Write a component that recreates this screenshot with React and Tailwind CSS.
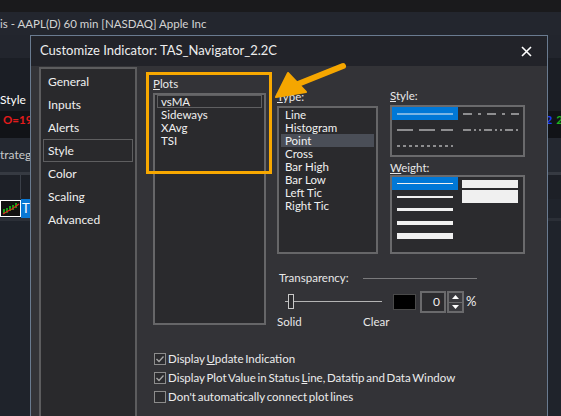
import React from 'react';

const navItems = ['General', 'Inputs', 'Alerts', 'Style', 'Color', 'Scaling', 'Advanced'];
const plots = ['vsMA', 'Sideways', 'XAvg', 'TSI'];
const types = ['Line', 'Histogram', 'Point', 'Cross', 'Bar High', 'Bar Low', 'Left Tic', 'Right Tic'];

// dash patterns for the Style grid, left column then right column
const styleCells = [
  { dash: undefined, selected: true },
  { dash: '9 6 3 6' },
  { dash: '16 6' },
  { dash: '8 3 2 3 2 3' },
  { dash: '3 3' },
  null,
];

function DashCell({ cell }) {
  if (!cell) return <div className="h-[13px]" />;
  return (
    <div className={`h-[13px] flex items-center pl-[5px] ${cell.selected ? 'bg-[#0078d7]' : ''}`}>
      <svg width="56" height="2" className="block">
        <line x1="0" y1="1" x2="56" y2="1" stroke="#f2f2f2" strokeWidth="1" strokeDasharray={cell.dash} />
      </svg>
    </div>
  );
}

function Checkbox({ checked, children }) {
  return (
    <div className="h-[19px] flex items-center">
      <div className="w-[12px] h-[12px] border border-[#8c8c8c] bg-[#2c2c2f] flex items-center justify-center shrink-0">
        {checked && (
          <svg width="10" height="10" viewBox="0 0 10 10">
            <polyline points="1.5,5 4,7.5 8.5,2.5" fill="none" stroke="#a8a8a8" strokeWidth="1.3" />
          </svg>
        )}
      </div>
      <span className="ml-[2px] text-[11.5px] leading-[15px] [word-spacing:-1.2px] text-[#ececec] whitespace-nowrap">
        {children}
      </span>
    </div>
  );
}

export default function App() {
  return (
    <div className="relative w-[561px] h-[416px] overflow-hidden bg-[#1f232b] font-['Lato',sans-serif]">
      {/* chart window behind the dialog */}
      <div className="flex flex-col">
        <div className="h-[12px] bg-[#1a1a1c]" />
        <div className="h-[23px] bg-[#23262e] text-[11.5px] leading-[23px] text-[#d4d4d4] whitespace-nowrap">
          is - AAPL(D) 60 min [NASDAQ] Apple Inc
        </div>
        <div className="h-[23px] bg-[#22252d]" />
        <div className="h-[53px] bg-[#1b1e25] flex items-end">
          <span className="text-[12px] leading-[23px] text-white">Style</span>
        </div>
        <div className="h-[27px] bg-[#111317] flex justify-between pt-[2px] text-[11.5px] font-bold leading-[14px]">
          <span className="ml-[3px] text-[#e31b1b]">O=19</span>
          <span className="flex gap-[4px] mr-[-2px]">
            <span className="text-[#1a3cff]">2</span>
            <span className="text-[#1fb51f]">2</span>
          </span>
        </div>
        <div className="h-[34px] bg-[#242830] flex items-center text-[12px] text-[#c8c8c8]">trategy</div>
        <div className="h-[3px] bg-[#363a42]" />
        <div className="h-[24px] flex bg-[#1d2027]">
          <div className="w-[21px] border-r border-[#3a3f48]" />
        </div>
        <div className="h-[19px] flex items-center">
          <div className="w-[21px] h-[17px] border border-white bg-[#111] flex items-center justify-center">
            <svg width="18" height="14" viewBox="0 0 18 14">
              <path d="M2 12 L2 7 M5 11 L5 6 M8 9 L8 4 M11 8 L11 3 M14 6 L14 1" stroke="#18d018" strokeWidth="1.5" />
              <path d="M1 12 L6 9 L10 7 L17 2" stroke="#e02020" strokeWidth="1.2" fill="none" />
            </svg>
          </div>
          <div className="w-[12px] h-[19px] bg-[#0a78d4] text-white text-[13px] leading-[19px] pl-[1px]">T</div>
        </div>
        <div className="h-[3px] bg-[#2b2f37]" />
      </div>

      {/* dialog window */}
      <div className="absolute left-[30px] top-[35px] w-[518px] h-[392px] border border-[#6a7b90] bg-[#333337] flex flex-col">
        <div className="h-[30px] shrink-0 bg-[#222329] flex items-center justify-between pl-[9px] pr-[15px]">
          <span className="text-[13px] text-[#eeeeee]">Customize Indicator: TAS_Navigator_2.2C</span>
          <svg width="11" height="11" viewBox="0 0 11 11">
            <path d="M1 1 L10 10 M10 1 L1 10" stroke="#ffffff" strokeWidth="1.6" />
          </svg>
        </div>

        <div className="flex-1 flex pl-[8px] pt-[1px] text-[11.5px]">
          {/* left nav */}
          <div className="w-[98px] border-2 border-[#5c5c5e] bg-[#29292c] pt-[1px] px-[2px]">
            {navItems.map((item) => (
              <div
                key={item}
                className={`h-[23px] flex items-center pl-[4px] border text-[12px] text-[#f0f0f0] ${
                  item === 'Style' ? 'border-[#5e5e60]' : 'border-transparent'
                }`}
              >
                {item}
              </div>
            ))}
          </div>

          {/* main panel */}
          <div className="ml-[16px] pt-[10px] flex flex-col">
            <div className="flex h-[252px]">
              {/* Plots */}
              <div className="w-[113px] flex flex-col">
                <div className="h-[14px] leading-[14px] text-[#e8e8e8]">
                  <u>P</u>lots
                </div>
                <div className="mt-[2px] h-[232px] border-2 border-[#666668] bg-[#2a2a2d] px-[2px]">
                  {plots.map((p, i) => (
                    <div
                      key={p}
                      className={`h-[13px] leading-[11px] flex items-center pl-[3px] border text-[#f0f0f0] ${
                        i === 0 ? 'border-[#5f5f61]' : 'border-transparent'
                      }`}
                    >
                      {p}
                    </div>
                  ))}
                </div>
              </div>

              <div className="ml-[11px] flex flex-col">
                <div className="flex">
                  {/* Type */}
                  <div className="w-[101px] mt-[13px] flex flex-col">
                    <div className="h-[14px] leading-[14px] text-[#e8e8e8]">
                      <u>T</u>ype:
                    </div>
                    <div className="mt-[2px] h-[148px] border-2 border-[#666668] bg-[#2a2a2d] px-[2px]">
                      {types.map((t) => (
                        <div
                          key={t}
                          className={`h-[13px] leading-[13px] flex items-center pl-[4px] text-[#f0f0f0] ${
                            t === 'Point' ? 'bg-[#4a4e57]' : ''
                          }`}
                        >
                          {t}
                        </div>
                      ))}
                    </div>
                  </div>

                  {/* Style + Weight */}
                  <div className="ml-[12px] w-[135px] mt-[12px] flex flex-col">
                    <div className="h-[16px] leading-[14px] text-[#e8e8e8]">
                      <u>S</u>tyle:
                    </div>
                    <div className="h-[52px] border-2 border-[#6a6a6c] bg-[#2b2b2e] grid grid-cols-[66px_65px]">
                      {[0, 1, 2, 3, 4, 5].map((i) => (
                        <DashCell key={i} cell={styleCells[i]} />
                      ))}
                    </div>
                    <div className="mt-[3px] h-[15px] leading-[15px] text-[#e8e8e8]">
                      <u>W</u>eight:
                    </div>
                    <div className="h-[79px] border-2 border-[#6a6a6c] bg-[#2b2b2e] flex">
                      <div className="w-[66px] flex flex-col">
                        {[1, 2, 3, 4, 6].map((t, i) => (
                          <div
                            key={t}
                            className={`h-[13px] flex items-center pl-[5px] ${i === 0 ? 'bg-[#0078d7]' : ''}`}
                          >
                            <div className="w-[56px] bg-[#f0f0f0]" style={{ height: t }} />
                          </div>
                        ))}
                      </div>
                      <div className="w-[65px] flex flex-col pl-[4px]">
                        <div className="h-[13px] flex items-center">
                          <div className="w-[56px] h-[8px] bg-[#f0f0f0]" />
                        </div>
                        <div className="h-[13px] w-[56px] bg-[#f0f0f0]" />
                      </div>
                    </div>
                  </div>
                </div>

                {/* Transparency */}
                <div className="mt-[17px] h-[14px] flex items-center">
                  <span className="w-[86px] pl-[2px] text-[#e8e8e8]">Transparency:</span>
                  <div className="w-[114px] h-px bg-[#7a7a7c]" />
                </div>
                <div className="mt-[6px] h-[22px] flex items-center">
                  <div className="relative ml-[8px] w-[97px] h-[16px]">
                    <div className="absolute left-0 right-0 top-[7px] h-px bg-[#b4b4b4]" />
                    <div className="absolute left-[3px] top-[0px] w-[6px] h-[15px] border border-[#c8c8c8] bg-[#2c2c2f]" />
                  </div>
                  <div className="ml-[11px] w-[23px] h-[16px] bg-black border border-[#4a4a4a]" />
                  <div className="ml-[4px] w-[26px] h-[22px] border-2 border-[#6a6a6c] bg-[#2b2b2e] flex items-center justify-end pr-[4px] text-[12px] text-[#f0f0f0]">
                    0
                  </div>
                  <div className="ml-[1px] w-[17px] h-[22px] border-2 border-[#6a6a6c] bg-[#3a3a3e] flex flex-col">
                    <div className="flex-1 flex items-center justify-center border-b border-[#6a6a6c]">
                      <svg width="7" height="4" viewBox="0 0 7 4">
                        <path d="M0 4 L3.5 0 L7 4Z" fill="#ffffff" />
                      </svg>
                    </div>
                    <div className="flex-1 flex items-center justify-center">
                      <svg width="7" height="4" viewBox="0 0 7 4">
                        <path d="M0 0 L3.5 4 L7 0Z" fill="#ffffff" />
                      </svg>
                    </div>
                  </div>
                  <span className="ml-[2px] text-[13px] text-[#f0f0f0]">%</span>
                </div>
                <div className="mt-[2px] h-[14px] flex items-center text-[#e8e8e8]">
                  <span className="w-[86px]">Solid</span>
                  <span>Clear</span>
                </div>
              </div>
            </div>

            {/* checkboxes */}
            <div className="mt-[20px] ml-[1px] flex flex-col">
              <Checkbox checked>
                Display <u>U</u>pdate Indication
              </Checkbox>
              <Checkbox checked>
                Display Plot Value in Status <u>L</u>ine, Datatip and Data Window
              </Checkbox>
              <Checkbox>Don't automatically connect plot lines</Checkbox>
            </div>
          </div>
        </div>
      </div>

      {/* annotation: highlight box and arrow */}
      <div className="absolute left-[146px] top-[72px] w-[126px] h-[102px] border-[3px] border-[#f8a800]" />
      <svg className="absolute left-0 top-0" width="561" height="416" viewBox="0 0 561 416">
        <line x1="343" y1="66" x2="293" y2="86" stroke="#f5a600" strokeWidth="6" strokeLinecap="round" />
        <path d="M276 97 L288 73 L306 92 Z" fill="#f5a600" stroke="#f5a600" strokeWidth="2" strokeLinejoin="round" />
      </svg>
    </div>
  );
}
